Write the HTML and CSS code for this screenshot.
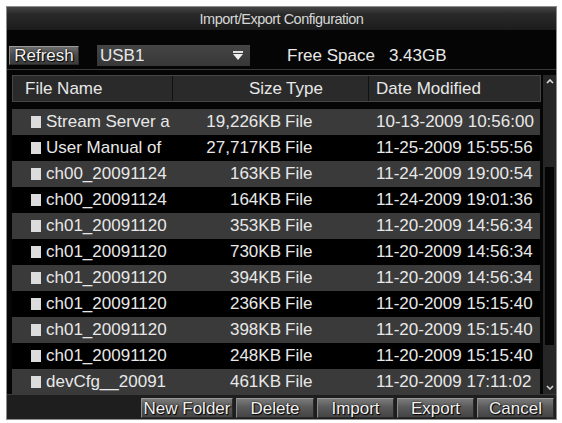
FILE: index.html
```html
<!DOCTYPE HTML>
<html lang="en">
<head>
	<title>Import/Export Configuration</title>
	<meta charset="utf-8">
	<link rel="stylesheet" href="styles.css">
</head>
<body>
	<div class="dialog">
		<div class="titlebar">Import/Export Configuration</div>

		<div class="toolbar">
			<button class="btn refresh">Refresh</button>
			<div class="select">
				<span>USB1</span>
				<svg class="caret" width="12" height="10" viewBox="0 0 12 10">
					<rect x="1" y="0" width="10" height="2" fill="#e0e0e0"/>
					<polygon points="1,3 11,3 6,9" fill="#f0f0f0"/>
				</svg>
			</div>
			<span class="label">Free Space</span>
			<span class="value">3.43GB</span>
		</div>

		<div class="browser">
			<div class="list">
				<div class="head">
					<div class="hcell hname">File Name</div>
					<div class="hcell hsize"><span class="hs">Size</span><span class="ht">Type</span></div>
					<div class="hcell hdate">Date Modified</div>
				</div>
				<div class="rows">
					<div class="row"><div class="name"><i class="ico"></i>Stream Server a</div><div class="size">19,226KB</div><div class="type">File</div><div class="date">10-13-2009 10:56:00</div></div>
					<div class="row"><div class="name"><i class="ico"></i>User Manual of</div><div class="size">27,717KB</div><div class="type">File</div><div class="date">11-25-2009 15:55:56</div></div>
					<div class="row"><div class="name"><i class="ico"></i>ch00_20091124</div><div class="size">163KB</div><div class="type">File</div><div class="date">11-24-2009 19:00:54</div></div>
					<div class="row"><div class="name"><i class="ico"></i>ch00_20091124</div><div class="size">164KB</div><div class="type">File</div><div class="date">11-24-2009 19:01:36</div></div>
					<div class="row"><div class="name"><i class="ico"></i>ch01_20091120</div><div class="size">353KB</div><div class="type">File</div><div class="date">11-20-2009 14:56:34</div></div>
					<div class="row"><div class="name"><i class="ico"></i>ch01_20091120</div><div class="size">730KB</div><div class="type">File</div><div class="date">11-20-2009 14:56:34</div></div>
					<div class="row"><div class="name"><i class="ico"></i>ch01_20091120</div><div class="size">394KB</div><div class="type">File</div><div class="date">11-20-2009 14:56:34</div></div>
					<div class="row"><div class="name"><i class="ico"></i>ch01_20091120</div><div class="size">236KB</div><div class="type">File</div><div class="date">11-20-2009 15:15:40</div></div>
					<div class="row"><div class="name"><i class="ico"></i>ch01_20091120</div><div class="size">398KB</div><div class="type">File</div><div class="date">11-20-2009 15:15:40</div></div>
					<div class="row"><div class="name"><i class="ico"></i>ch01_20091120</div><div class="size">248KB</div><div class="type">File</div><div class="date">11-20-2009 15:15:40</div></div>
					<div class="row"><div class="name"><i class="ico"></i>devCfg__20091</div><div class="size">461KB</div><div class="type">File</div><div class="date">11-20-2009 17:11:02</div></div>
				</div>
			</div>

			<div class="scrollbar">
				<div class="arrow">
					<svg width="8" height="5" viewBox="0 0 8 5"><polyline points="1,4 4,1 7,4" fill="none" stroke="#e0e0e0" stroke-width="1.6"/></svg>
				</div>
				<div class="track">
					<div class="thumb"></div>
				</div>
				<div class="arrow">
					<svg width="8" height="5" viewBox="0 0 8 5"><polyline points="1,1 4,4 7,1" fill="none" stroke="#d0d0d0" stroke-width="1.6"/></svg>
				</div>
			</div>
		</div>

		<div class="footer">
			<button class="btn w-new">New Folder</button>
			<button class="btn w-del">Delete</button>
			<button class="btn w-std">Import</button>
			<button class="btn w-std">Export</button>
			<button class="btn w-std">Cancel</button>
		</div>
	</div>
</body>
</html>
```

FILE: styles.css
```css
html {
	height: 100%;
}

body {
	margin: 0;
	padding: 0;
	background: #ffffff;
	color: #e8e8e8;
	font-family: "Liberation Sans", Arial, sans-serif;
	font-size: 17px;
}

.dialog {
	margin: 6px 0 0 6px;
	width: 551px;
	height: 414px;
	box-sizing: border-box;
	border: 1px solid #8c8c8c;
	background: #050505;
	display: flex;
	flex-direction: column;
}

.titlebar {
	height: 23px;
	flex: none;
	background: linear-gradient(#454545, #2a2a2a 30%, #1c1c1c);
	color: #d6d6d6;
	font-size: 14.5px;
	line-height: 24px;
	text-align: center;
	letter-spacing: -0.5px;
}

/* refresh, device list and free space */
.toolbar {
	height: 39px;
	flex: none;
	box-sizing: border-box;
	padding: 15px 0 0 2px;
	display: flex;
	align-items: flex-start;
}

.btn {
	font-family: inherit;
	font-size: 17px;
	color: #f2f2f2;
	height: 20px;
	line-height: 17px;
	padding: 0;
	border: 1px solid #2a2a2a;
	border-top-color: #9a9a9a;
	border-left-color: #8a8a8a;
	background: linear-gradient(#7a7a7a, #5a5a5a 45%, #444444);
	text-shadow: 0 0 2px #000, 1px 1px 1px #000;
}

.refresh {
	width: 70px;
	height: 19px;
	margin-top: 1px;
	background: linear-gradient(#6a6a6a, #4a4a4a 50%, #3c3c3c);
}

.select {
	margin-left: 18px;
	width: 153px;
	height: 21px;
	box-sizing: border-box;
	padding: 0 4px 0 3px;
	background: linear-gradient(#454545, #373737);
	display: flex;
	align-items: center;
	justify-content: space-between;
	line-height: 21px;
}

.caret {
	display: block;
	margin-right: 2px;
}

.label {
	margin-left: 37px;
	line-height: 21px;
}

.value {
	margin-left: 14px;
	line-height: 21px;
}

/* file list with scrollbar */
.browser {
	height: 326px;
	flex: none;
	box-sizing: border-box;
	border-top: 1px solid #3a3a3a;
	border-bottom: 1px solid #3a3a3a;
	padding: 5px 0 0 5px;
	display: flex;
}

.list {
	width: 530px;
}

.head {
	display: flex;
	height: 27px;
	margin-bottom: 7px;
	background: #2a2a2a;
	border: 1px solid #464646;
	box-sizing: border-box;
}

.hcell {
	line-height: 25px;
	border-right: 1px solid #111111;
	box-sizing: border-box;
}

.hname {
	width: 160px;
	padding-left: 12px;
}

.hsize {
	width: 196px;
	display: flex;
}

.hs {
	width: 109px;
	text-align: right;
}

.ht {
	padding-left: 4px;
}

.hdate {
	flex: 1;
	padding-left: 7px;
	border-right: none;
}

.rows {
	width: 528px;
}

.row {
	display: grid;
	grid-template-columns: 178px 91px 87px 1fr;
	height: 26px;
	line-height: 26px;
	white-space: nowrap;
}

.row:nth-child(odd) {
	background: #3a3a3a;
}

.row:nth-child(even) {
	background: #000000;
}

.name {
	padding-left: 19px;
	display: flex;
	align-items: center;
	overflow: hidden;
}

.ico {
	width: 10px;
	height: 12px;
	margin-right: 5px;
	background: #dcdcdc;
	flex: none;
}

.size {
	text-align: right;
}

.type {
	padding-left: 4px;
}

.date {
	padding-left: 8px;
}

.scrollbar {
	width: 13px;
	margin-left: 2px;
	display: flex;
	flex-direction: column;
	background: #262626;
}

.arrow {
	height: 13px;
	display: flex;
	align-items: center;
	justify-content: center;
}

.track {
	flex: 1;
}

.thumb {
	margin: 79px 0 0 2px;
	width: 9px;
	height: 178px;
	background: #050505;
}

/* dialog buttons */
.footer {
	flex: 1;
	background: #1e1e1e;
	display: flex;
	justify-content: flex-end;
	gap: 3px;
	padding: 3px 2px 0 0;
}

.w-new {
	width: 92px;
}

.w-del {
	width: 78px;
}

.w-std {
	width: 77px;
}
```
